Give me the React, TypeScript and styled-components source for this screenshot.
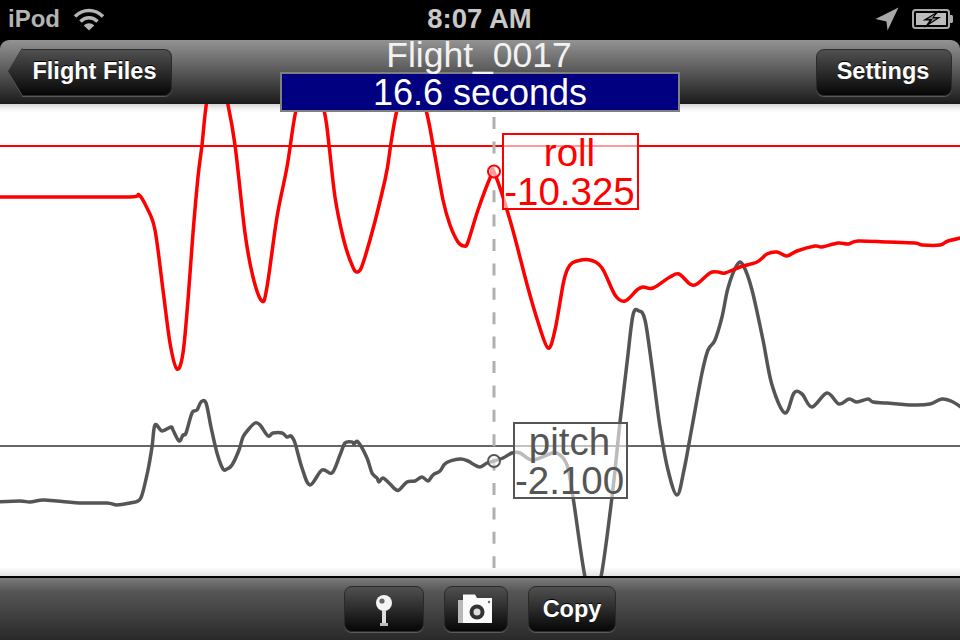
import React, { FC } from 'react';
import styled, { createGlobalStyle } from 'styled-components';

type Point = [number, number];

const ROLL: Point[] = [
  [-5, 197], [60, 197], [130, 197], [139, 195], [147, 208], [155, 230], [163, 290], [170, 343], [177, 369],
  [183, 353], [188, 300], [193, 233], [198, 177], [202, 145], [207, 100], [217, 60], [227, 100], [235, 145],
  [245, 233], [253, 277], [262, 301], [267, 287], [277, 217], [287, 167], [296, 110], [310, 60], [324, 110],
  [329, 145], [335, 197], [343, 237], [350, 260], [357, 272], [365, 257], [385, 180], [391, 143], [397, 110],
  [411, 60], [426, 110], [433, 145], [443, 200], [450, 225], [458, 242], [464, 246], [468, 242], [478, 210],
  [490, 178], [494, 172], [510, 220], [528, 288], [538, 322], [548, 348], [555, 330], [564, 280], [570, 265],
  [577, 261], [590, 260], [602, 268], [615, 295], [625, 301], [637, 290], [643, 287], [653, 288], [670, 277],
  [679, 274], [690, 284], [697, 284], [710, 273], [718, 272], [725, 273], [740, 267], [757, 262], [767, 254],
  [777, 252], [787, 256], [797, 251], [815, 246], [822, 247], [838, 243], [848, 244], [858, 241], [888, 242],
  [915, 243], [922, 245], [940, 245], [948, 241], [965, 237],
];

const PITCH: Point[] = [
  [-5, 502], [20, 501], [30, 502], [43, 500], [57, 501], [83, 503], [107, 503], [117, 505], [130, 503],
  [138, 501], [142, 495], [148, 470], [152, 447], [155, 425], [162, 431], [171, 427], [173, 430], [179, 441],
  [183, 435], [186, 433], [192, 413], [197, 410], [201, 402], [206, 403], [211, 427], [217, 453], [223, 469],
  [227, 469], [232, 465], [239, 450], [243, 437], [248, 430], [255, 423], [260, 425], [268, 436], [273, 433],
  [282, 433], [287, 437], [291, 436], [295, 443], [302, 468], [310, 485], [322, 470], [332, 473], [340, 455],
  [345, 443], [352, 442], [354, 444], [358, 442], [367, 458], [372, 473], [377, 478], [379, 482], [383, 478],
  [390, 484], [395, 489], [399, 490], [407, 482], [415, 481], [422, 477], [428, 481], [433, 475], [440, 471],
  [446, 463], [460, 459], [468, 461], [473, 464], [480, 467], [487, 463], [494, 461], [503, 458], [512, 453],
  [520, 453], [532, 460], [547, 455], [557, 453], [567, 465], [573, 497], [585, 577], [593, 590], [601, 577],
  [612, 497], [620, 422], [627, 363], [633, 315], [639, 311], [645, 320], [652, 367], [660, 427], [668, 470],
  [677, 495], [684, 470], [692, 427], [702, 373], [708, 350], [715, 340], [722, 317], [728, 288], [737, 265],
  [743, 265], [752, 290], [763, 340], [772, 385], [785, 413], [794, 393], [802, 394], [812, 407], [827, 393],
  [839, 404], [849, 399], [857, 402], [868, 399], [873, 402], [887, 403], [913, 405], [930, 404], [942, 399],
  [953, 402], [965, 410],
];

// catmull-rom through the sampled points
const toPath = (pts: Point[]) => {
  let d = `M${pts[0][0]} ${pts[0][1]}`;
  for (let i = 0; i < pts.length - 1; i++) {
    const p0 = pts[i - 1] ?? pts[i];
    const p1 = pts[i];
    const p2 = pts[i + 1];
    const p3 = pts[i + 2] ?? p2;
    const c1x = p1[0] + (p2[0] - p0[0]) / 6;
    const c1y = p1[1] + (p2[1] - p0[1]) / 6;
    const c2x = p2[0] - (p3[0] - p1[0]) / 6;
    const c2y = p2[1] - (p3[1] - p1[1]) / 6;
    d += `C${c1x.toFixed(1)} ${c1y.toFixed(1)} ${c2x.toFixed(1)} ${c2y.toFixed(1)} ${p2[0]} ${p2[1]}`;
  }
  return d;
};

const GlobalStyle = createGlobalStyle`
  html, body {
    margin: 0;
    background: #000;
  }
  body {
    font-family: "Liberation Sans", Arial, sans-serif;
  }
`;

const Screen = styled.div`
  display: flex;
  flex-direction: column;
  width: 960px;
  height: 640px;
  overflow: hidden;
  background: #000;
`;

const StatusBar = styled.div`
  display: grid;
  grid-template-columns: 1fr auto 1fr;
  align-items: center;
  height: 40px;
  padding: 0 6px 2px 8px;
  box-sizing: border-box;
  color: #b4b4b4;
  font-size: 24px;
  font-weight: bold;
`;

const StatusSide = styled.div<{ $right?: boolean }>`
  display: flex;
  align-items: center;
  justify-content: ${(p) => (p.$right ? 'flex-end' : 'flex-start')};
  gap: 13px;
`;

const Clock = styled.div`
  padding-right: 3px;
  color: #c8c8c8;
  font-size: 27.5px;
`;

const NavBar = styled.div`
  position: relative;
  display: flex;
  align-items: center;
  justify-content: space-between;
  flex: none;
  height: 64px;
  padding: 0 8px 0 22px;
  box-sizing: border-box;
  border-radius: 9px 9px 0 0;
  background: linear-gradient(#939393 0, #1b1b1b 100%);
  z-index: 2;
`;

const BarButton = styled.div<{ $width: number }>`
  position: relative;
  display: flex;
  align-items: center;
  justify-content: center;
  width: ${(p) => p.$width}px;
  height: 47px;
  padding: 0 2px 2px 0;
  box-sizing: border-box;
  border: 1px solid #2a2a2a;
  border-radius: 8px;
  background: linear-gradient(#505050 0, #060606 100%);
  box-shadow: 0 1px 0 rgba(255, 255, 255, 0.22);
  color: #fff;
  font-size: 23.5px;
  font-weight: bold;
  text-shadow: 0 -1px 0 #000;
`;

const BackButton = styled(BarButton)`
  border-left: none;
  border-radius: 0 8px 8px 0;
  padding-right: 4px;
  &::before {
    content: '';
    position: absolute;
    left: -17px;
    top: 5px;
    width: 34px;
    height: 34px;
    box-sizing: border-box;
    border-left: 1px solid #2a2a2a;
    border-bottom: 1px solid #555;
    background: linear-gradient(135deg, #505050 0, #060606 100%);
    transform: scaleX(0.6) rotate(45deg);
  }
  span {
    position: relative;
  }
`;

const TitleBlock = styled.div`
  position: absolute;
  top: -3px;
  left: 280px;
  width: 400px;
  text-align: center;
`;

const Title = styled.div`
  height: 36px;
  color: #f2f2f2;
  font-size: 35.5px;
  line-height: 36px;
  padding-right: 2px;
`;

const Elapsed = styled.div`
  height: 40px;
  margin-top: -1px;
  box-sizing: border-box;
  border: 2px solid #808080;
  background: #000080;
  color: #fff;
  font-size: 36px;
  line-height: 37px;
`;

const ChartArea = styled.div`
  position: relative;
  flex: 1;
  overflow: hidden;
  background: linear-gradient(#d4d4d4 0, #f4f4f4 5px, #fff 9px, #fff calc(100% - 9px), #e0e0e0 100%);
`;

const ChartSvg = styled.svg`
  display: block;
`;

const Readout = styled.div<{ $left: number; $top: number; $width: number; $color: string }>`
  position: absolute;
  left: ${(p) => p.$left}px;
  top: ${(p) => p.$top}px;
  width: ${(p) => p.$width}px;
  height: 77px;
  padding-right: 2px;
  box-sizing: border-box;
  border: 2px solid ${(p) => p.$color};
  background: rgba(255, 255, 255, 0.6);
  color: ${(p) => p.$color};
  font-size: 38.5px;
  line-height: 37px;
  text-align: center;
  white-space: nowrap;
`;

const ReadoutName = styled.div`
  margin: -1px 0 2px;
`;

const Toolbar = styled.div`
  display: flex;
  align-items: center;
  justify-content: center;
  flex: none;
  gap: 20px;
  height: 64px;
  box-sizing: border-box;
  border-top: 2px solid #000;
  background: linear-gradient(#7a7a7a 0, #565656 22%, #292929 100%);
`;

const ToolButton = styled(BarButton)`
  height: 46px;
  padding: 0;
`;

const WifiIcon = () => (
  <svg width="32" height="24" viewBox="0 0 32 24" fill="none" stroke="#b4b4b4" strokeWidth="3.6">
    <path d="M2 9.5C10 1.5 22 1.5 30 9.5" />
    <path d="M7.5 14.5C12.5 9.5 19.5 9.5 24.5 14.5" />
    <path d="M16 23.5L10.8 18.4C13.6 15.6 18.4 15.6 21.2 18.4Z" fill="#b4b4b4" stroke="none" />
  </svg>
);

const LocationIcon = () => (
  <svg width="24" height="24" viewBox="0 0 24 24">
    <path d="M23.5 0.5L0.5 12L11.5 14.5L12.5 23.5Z" fill="#a8a8a8" />
  </svg>
);

const BatteryIcon = () => (
  <svg width="42" height="20" viewBox="0 0 42 20">
    <rect x="1" y="1" width="36" height="18" rx="2.5" fill="none" stroke="#a8a8a8" strokeWidth="2" />
    <rect x="4" y="4" width="30" height="12" fill="#bcbcbc" />
    <path d="M38 6H39.5C40.3 6 41 6.7 41 7.5V12.5C41 13.3 40.3 14 39.5 14H38Z" fill="#a8a8a8" />
    <path d="M28 1L10.5 11.5H17.5L12 19L29 8H22Z" fill="#000" />
    <path d="M22.5 5.5L15.5 10H20.5L18.5 13.5L24.5 9.5H20Z" fill="#8c8c8c" />
  </svg>
);

const PinIcon = () => (
  <svg width="24" height="38" viewBox="0 0 24 38">
    <circle cx="12" cy="13" r="8" fill="#f4f4f4" />
    <circle cx="10" cy="11" r="2.6" fill="#666" />
    <rect x="10" y="20" width="4" height="14" fill="#ddd" />
    <rect x="8" y="33" width="8" height="3" fill="#bbb" />
  </svg>
);

const CameraIcon = () => (
  <svg width="38" height="30" viewBox="0 0 38 30">
    <path d="M1 6H6V0.5H18L20 4H35V29H1Z" fill="#fafafa" />
    <rect x="1" y="6" width="5" height="23" fill="#b8b8b8" />
    <circle cx="20" cy="18" r="7.5" fill="#333" />
    <circle cx="20" cy="18" r="3.5" fill="#ddd" />
    <circle cx="32" cy="8" r="1.2" fill="#666" />
  </svg>
);

const App: FC = () => {
  return (
    <Screen>
      <GlobalStyle />
      <StatusBar>
        <StatusSide>
          iPod
          <WifiIcon />
        </StatusSide>
        <Clock>8:07 AM</Clock>
        <StatusSide $right>
          <LocationIcon />
          <BatteryIcon />
        </StatusSide>
      </StatusBar>
      <NavBar>
        <BackButton $width={150}>
          <span>Flight Files</span>
        </BackButton>
        <BarButton $width={136}>Settings</BarButton>
        <TitleBlock>
          <Title>Flight_0017</Title>
          <Elapsed>16.6 seconds</Elapsed>
        </TitleBlock>
      </NavBar>
      <ChartArea>
        <ChartSvg width="960" height="472" viewBox="0 104 960 472" fill="none">
          <line x1="0" y1="146" x2="960" y2="146" stroke="#f00" strokeWidth="2" />
          <line x1="0" y1="446" x2="960" y2="446" stroke="#666" strokeWidth="2" />
          <line x1="494" y1="117" x2="494" y2="568" stroke="#b0b0b0" strokeWidth="3" strokeDasharray="12 12.4" />
          <path d={toPath(PITCH)} stroke="#555" strokeWidth="3.5" strokeLinejoin="round" />
          <path d={toPath(ROLL)} stroke="#f00" strokeWidth="3.5" strokeLinejoin="round" />
          <circle cx="494" cy="171.5" r="6" fill="rgba(255,255,255,0.6)" stroke="#f00" strokeWidth="2" />
          <circle cx="494" cy="461" r="6" fill="rgba(255,255,255,0.6)" stroke="#555" strokeWidth="2" />
        </ChartSvg>
        <Readout $left={502} $top={29} $width={137} $color="#f00">
          <ReadoutName>roll</ReadoutName>
          -10.325
        </Readout>
        <Readout $left={513} $top={318} $width={115} $color="#555">
          <ReadoutName>pitch</ReadoutName>
          -2.100
        </Readout>
      </ChartArea>
      <Toolbar>
        <ToolButton $width={80}>
          <PinIcon />
        </ToolButton>
        <ToolButton $width={64}>
          <CameraIcon />
        </ToolButton>
        <ToolButton $width={88}>Copy</ToolButton>
      </Toolbar>
    </Screen>
  );
};

export default App;
